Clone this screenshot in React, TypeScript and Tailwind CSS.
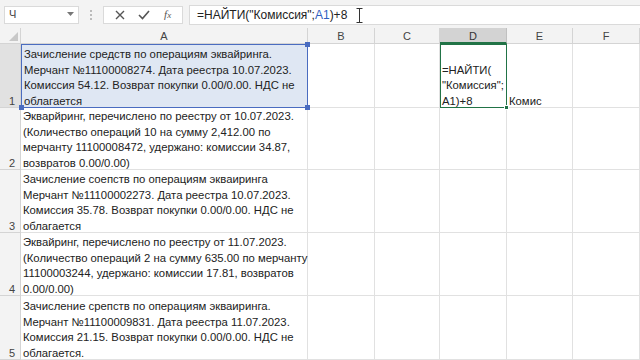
import React from "react";

const rows = [
  {
    n: 1,
    h: "h-[64px]",
    text: [
      "Зачисление средств по операциям эквайринга.",
      "Мерчант №11100008274. Дата реестра 10.07.2023.",
      "Комиссия 54.12. Возврат покупки 0.00/0.00. НДС не",
      "облагается",
    ],
  },
  {
    n: 2,
    h: "h-[62px]",
    text: [
      "Экварйринг, перечислено по реестру от 10.07.2023.",
      "(Количество операций 10 на сумму 2,412.00 по",
      "мерчанту 11100008472, удержано: комиссии 34.87,",
      "возвратов 0.00/0.00)",
    ],
  },
  {
    n: 3,
    h: "h-[63px]",
    text: [
      "Зачисление соепств по операциям экваиринга",
      "Мерчант №11100002273. Дата реестра 10.07.2023.",
      "Комиссия 35.78. Возврат покупки 0.00/0.00. НДС не",
      "облагается",
    ],
  },
  {
    n: 4,
    h: "h-[63px]",
    text: [
      "Эквайринг, перечислено по реестру от 11.07.2023.",
      "(Количество операций 2 на сумму 635.00 по мерчанту",
      "11100003244, удержано: комиссии 17.81, возвратов",
      "0.00/0.00)",
    ],
  },
  {
    n: 5,
    h: "h-[64px]",
    text: [
      "Зачисление срепств по операциям экваиринга.",
      "Мерчант №11100009831. Дата реестра 11.07.2023.",
      "Комиссия 21.15. Возврат покупки 0.00/0.00. НДС не",
      "облагается.",
    ],
  },
];

const cols = ["B", "C", "D", "E", "F"];

export default function App() {
  return (
    <div
      className="w-[640px] h-[360px] overflow-hidden bg-white text-[#222]"
      style={{ fontFamily: "'Liberation Sans', 'Noto Sans', sans-serif" }}
    >
      {/* строка формул */}
      <div className="h-[28px] bg-[#f3f3f3] flex items-center gap-0 pt-[1px]">
        <div className="ml-[4px] w-[75px] h-[18px] bg-white border border-[#dadada] flex items-center justify-between px-[4px]">
          <span className="text-[11px] text-[#444]">Ч</span>
          <svg width="7" height="5" viewBox="0 0 7 5">
            <path d="M0 0 L7 0 L3.5 4 Z" fill="#777" />
          </svg>
        </div>
        <div className="w-[24px] flex justify-center">
          <div className="flex flex-col gap-[2px]">
            <span className="w-[2px] h-[2px] bg-[#bbb]" />
            <span className="w-[2px] h-[2px] bg-[#bbb]" />
            <span className="w-[2px] h-[2px] bg-[#bbb]" />
          </div>
        </div>
        <div className="w-[80px] h-[18px] bg-white border border-[#dadada] flex items-center justify-around px-[4px]">
          <svg width="10" height="10" viewBox="0 0 10 10">
            <path d="M1 1 L9 9 M9 1 L1 9" stroke="#555" strokeWidth="1.4" />
          </svg>
          <svg width="12" height="10" viewBox="0 0 12 10">
            <path d="M1 5 L4.5 8.5 L11 1" stroke="#555" strokeWidth="1.6" fill="none" />
          </svg>
          <span
            className="text-[11px] italic text-[#555]"
            style={{ fontFamily: "'Liberation Serif', serif" }}
          >
            f<span className="text-[9px]">x</span>
          </span>
        </div>
        <div className="ml-[6px] flex-1 h-[20px] bg-white border-y border-l border-[#dadada] flex items-center pl-[7px] relative">
          <span className="text-[12px] text-[#222]">
            =НАЙТИ("Комиссия";<span className="text-[#2f5fbf]">A1</span>)+8
          </span>
          <svg className="absolute left-[166px] top-[2px]" width="7" height="15" viewBox="0 0 7 15">
            <path d="M0.5 0.5 H6.5 M3.5 0.5 V14.5 M0.5 14.5 H6.5" stroke="#333" strokeWidth="1" fill="none" />
          </svg>
        </div>
      </div>

      {/* таблица */}
      <div className="grid grid-cols-[21px_287px_67px_65px_67px_66px_67px]">
        {/* заголовки столбцов */}
        <div className="h-[16px] bg-[#f3f3f3] border-r border-b border-[#d4d4d4] flex items-end justify-end pr-[2px] pb-[2px]">
          <svg width="9" height="9" viewBox="0 0 9 9">
            <path d="M9 0 L9 9 L0 9 Z" fill="#c8c8c8" />
          </svg>
        </div>
        <div className="h-[16px] bg-[#f3f3f3] border-r border-b border-[#d4d4d4] flex items-center justify-center pt-[2px] text-[11px] text-[#444]">
          A
        </div>
        {cols.map((c) => (
          <div
            key={c}
            className={
              c === "D"
                ? "h-[16px] bg-[#d3d3d3] border-r border-b-2 border-b-[#217346] border-r-[#c0c0c0] flex items-center justify-center pt-[2px] text-[11px] text-[#333]"
                : "h-[16px] bg-[#f3f3f3] border-r border-b border-[#d4d4d4] flex items-center justify-center pt-[2px] text-[11px] text-[#444]"
            }
          >
            {c}
          </div>
        ))}

        {rows.map((r) => (
          <React.Fragment key={r.n}>
            <div
              className={
                (r.n === 1 ? "bg-[#e1e1e1] " : "bg-[#f3f3f3] ") +
                r.h +
                " border-r border-b border-[#d4d4d4] flex items-end justify-end pr-[5px] text-[11px] text-[#444]"
              }
            >
              <span className="translate-y-[2px]">{r.n}</span>
            </div>
            <div
              className={
                (r.n === 1 ? "bg-[#dfe7f3] border-[#4a6cc0] border-[1.5px] relative " : "border-r border-b border-[#e1e1e1] ") +
                r.h +
                " flex flex-col justify-end pl-[2px] text-[11.3px] leading-[15.8px] text-[#222] whitespace-nowrap"
              }
            >
              <div className="translate-y-[3px]">
                {r.text.map((t, i) => (
                  <div key={i}>{t}</div>
                ))}
              </div>
              {r.n === 1 && (
                <>
                  <span className="absolute -right-[3px] -top-[3px] w-[5px] h-[5px] bg-[#4a6cc0]" />
                  <span className="absolute -right-[3px] -bottom-[3px] w-[5px] h-[5px] bg-[#4a6cc0]" />
                  <span className="absolute -left-[3px] -bottom-[3px] w-[5px] h-[5px] bg-[#4a6cc0]" />
                </>
              )}
            </div>
            {cols.map((c) => {
              if (r.n === 1 && c === "D") {
                return (
                  <div
                    key={c}
                    className={r.h + " border-[1.5px] border-[#217346] relative flex flex-col justify-end pl-[1px] text-[11.3px] leading-[15.8px] text-[#222] whitespace-nowrap"}
                  >
                    <div className="translate-y-[3px]">
                      <div>=НАЙТИ(</div>
                      <div>"Комиссия";</div>
                      <div>A1)+8</div>
                    </div>
                    <span className="absolute -right-[3px] -bottom-[3px] w-[5px] h-[5px] bg-[#217346] border border-white" />
                  </div>
                );
              }
              if (r.n === 1 && c === "E") {
                return (
                  <div
                    key={c}
                    className={r.h + " border-r border-b border-[#e1e1e1] flex flex-col justify-end pl-[2px] text-[11.3px] leading-[15.8px] text-[#222]"}
                  >
                    <div className="translate-y-[3px]">Комис</div>
                  </div>
                );
              }
              return (
                <div key={c} className={r.h + " border-r border-b border-[#e1e1e1]"} />
              );
            })}
          </React.Fragment>
        ))}
      </div>
    </div>
  );
}
